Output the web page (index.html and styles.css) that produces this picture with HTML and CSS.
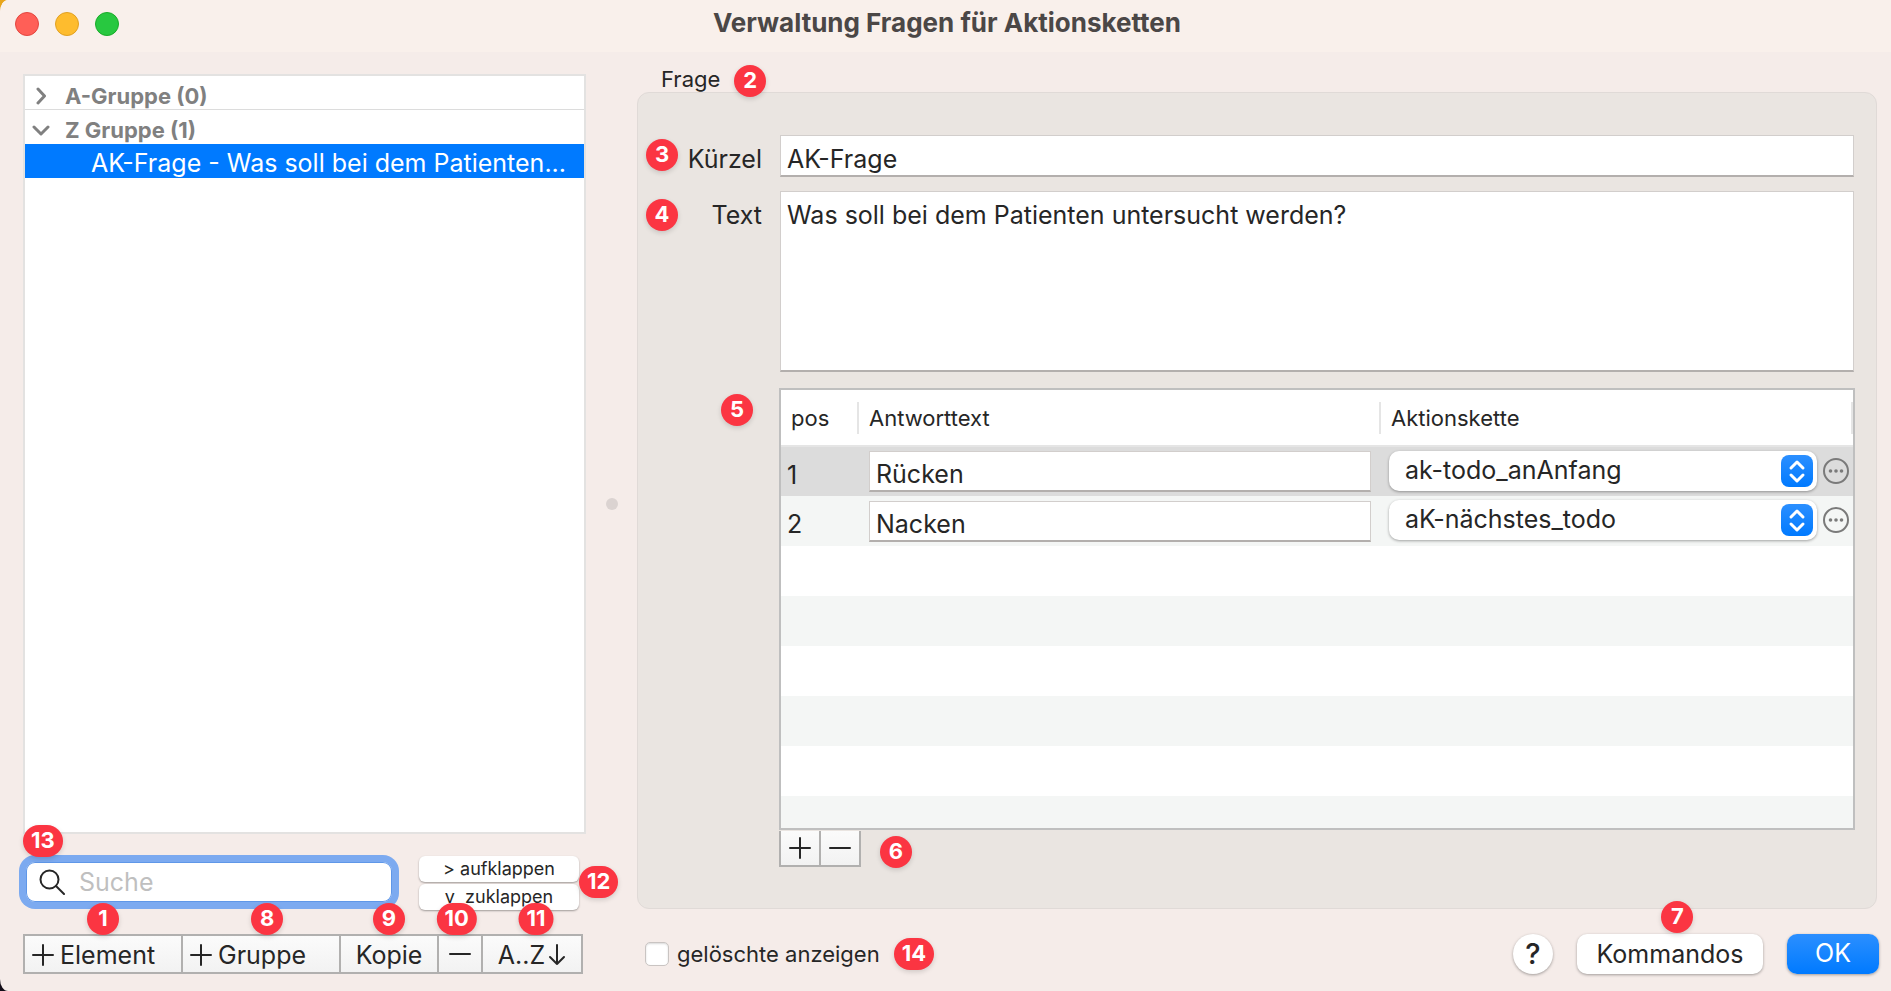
FILE: index.html
```html
<!DOCTYPE html>
<html lang="de">
<head>
<meta charset="utf-8">
<title>Verwaltung Fragen für Aktionsketten</title>
<link rel="stylesheet" href="styles.css">
</head>
<body>
<div class="window">
  <header class="titlebar">
    <div class="lights">
      <button class="light light-close" type="button" aria-label="Schließen"></button>
      <button class="light light-min" type="button" aria-label="Minimieren"></button>
      <button class="light light-zoom" type="button" aria-label="Zoomen"></button>
    </div>
    <h1 class="title">Verwaltung Fragen für Aktionsketten</h1>
  </header>

  <div class="content">
    <aside class="sidebar">
      <ul class="tree">
        <li class="group">
          <svg class="chevron" viewBox="0 0 18 18"><path d="M6 2l6.500 7L6 16"/></svg>
          <span>A-Gruppe (0)</span>
        </li>
        <li class="group">
          <svg class="chevron" viewBox="0 0 18 18"><path d="M2 6l7 7 7-7"/></svg>
          <span>Z Gruppe (1)</span>
        </li>
        <li class="item">AK-Frage - Was soll bei dem Patienten...</li>
      </ul>

      <div class="search-row">
        <div class="search">
          <svg class="search-icon" viewBox="0 0 26 26"><circle cx="10.500" cy="10.500" r="9"/><path d="M17 17l8 8"/></svg>
          <input class="search-input" type="text" placeholder="Suche" aria-label="Suche">
          <span class="badge badge-search">13</span>
        </div>
        <div class="fold">
          <button class="fold-button" type="button">&gt; aufklappen</button>
          <button class="fold-button" type="button">v&nbsp; zuklappen</button>
          <span class="badge badge-fold">12</span>
        </div>
      </div>

      <div class="toolbar">
        <button class="tool tool-wide" type="button"><svg class="plus" viewBox="0 0 22 22"><path d="M1 11h20M11 1v20"/></svg>Element<span class="badge badge-above">1</span></button>
        <button class="tool tool-wide" type="button"><svg class="plus" viewBox="0 0 22 22"><path d="M1 11h20M11 1v20"/></svg>Gruppe<span class="badge badge-above badge-right">8</span></button>
        <button class="tool" type="button">Kopie<span class="badge badge-above">9</span></button>
        <button class="tool" type="button" aria-label="Löschen"><svg class="plus" viewBox="0 0 22 22"><path d="M1 10h20"/></svg><span class="badge badge-above badge-left">10</span></button>
        <button class="tool tool-sort" type="button">A..Z<svg class="arrow" viewBox="0 0 18 22"><path d="M9 1v19M2 13l7 7 7-7"/></svg><span class="badge badge-above badge-right">11</span></button>
      </div>
    </aside>

    <div class="splitter"><span class="splitter-dot"></span></div>

    <main class="main">
      <div class="legend"><h2 class="legend-text">Frage</h2><span class="badge">2</span></div>
      <section class="box">
        <div class="side"><span class="badge">3</span><label for="kuerzel">Kürzel</label></div>
        <input class="field" id="kuerzel" type="text" value="AK-Frage">

        <div class="side side-text"><span class="badge">4</span><label for="text">Text</label></div>
        <textarea class="field area" id="text">Was soll bei dem Patienten untersucht werden?</textarea>

        <div class="side side-table"><span class="badge">5</span></div>
        <div class="answers">
          <div class="table-frame">
            <table class="table">
              <colgroup><col class="col-pos"><col class="col-text"><col class="col-chain"></colgroup>
              <thead>
                <tr><th><div class="head">pos</div></th><th><div class="head">Antworttext</div></th><th><div class="head">Aktionskette</div></th></tr>
              </thead>
              <tbody>
                <tr class="selected">
                  <td class="pos">1</td>
                  <td class="cell-text"><input class="field cell-field" type="text" value="Rücken" aria-label="Antworttext 1"></td>
                  <td class="cell-chain"><div class="chain">
                    <div class="select-wrap">
                      <select class="select" aria-label="Aktionskette 1"><option>ak-todo_anAnfang</option></select>
                      <svg class="stepper" viewBox="0 0 32 32"><path d="M10 13l6-6 6 6M10 20l6 6 6-6"/></svg>
                    </div>
                    <button class="more" type="button" aria-label="Mehr"><svg viewBox="0 0 26 26"><circle class="ring" cx="13" cy="13" r="12"/><circle cx="7.500" cy="13" r="1.800"/><circle cx="13" cy="13" r="1.800"/><circle cx="18.500" cy="13" r="1.800"/></svg></button>
                  </div></td>
                </tr>
                <tr class="striped">
                  <td class="pos">2</td>
                  <td class="cell-text"><input class="field cell-field" type="text" value="Nacken" aria-label="Antworttext 2"></td>
                  <td class="cell-chain"><div class="chain">
                    <div class="select-wrap">
                      <select class="select" aria-label="Aktionskette 2"><option>aK-nächstes_todo</option></select>
                      <svg class="stepper" viewBox="0 0 32 32"><path d="M10 13l6-6 6 6M10 20l6 6 6-6"/></svg>
                    </div>
                    <button class="more" type="button" aria-label="Mehr"><svg viewBox="0 0 26 26"><circle class="ring" cx="13" cy="13" r="12"/><circle cx="7.500" cy="13" r="1.800"/><circle cx="13" cy="13" r="1.800"/><circle cx="18.500" cy="13" r="1.800"/></svg></button>
                  </div></td>
                </tr>
              </tbody>
            </table>
            <div class="stripes"></div>
          </div>
          <div class="row-tools">
            <div class="row-buttons">
              <button class="row-button" type="button" aria-label="Antwort hinzufügen"><svg class="plus" viewBox="0 0 22 22"><path d="M1 11h20M11 1v20"/></svg></button>
              <button class="row-button" type="button" aria-label="Antwort entfernen"><svg class="plus" viewBox="0 0 22 22"><path d="M1 11h20"/></svg></button>
            </div>
            <span class="badge">6</span>
          </div>
        </div>
      </section>

      <footer class="footer">
        <input class="check" id="deleted" type="checkbox">
        <label class="check-label" for="deleted">gelöschte anzeigen</label>
        <span class="badge">14</span>
        <div class="actions">
          <button class="help" type="button">?</button>
          <button class="push" type="button">Kommandos<span class="badge badge-above badge-right">7</span></button>
          <button class="push push-ok" type="button">OK</button>
        </div>
      </footer>
    </main>
  </div>
</div>
</body>
</html>
```

FILE: styles.css
```css
* { box-sizing: border-box; }

body {
  margin: 0;
  background: linear-gradient(#e8a51c 0 50%, #120c18 50%);
  color: #262626;
  font: 25px/32px Inter, "Liberation Sans", sans-serif;
}

button, input, textarea, select { font: inherit; color: inherit; margin: 0; }
button { border: 0; padding: 0; }

.window {
  display: flex;
  flex-direction: column;
  min-height: 100vh;
  overflow: hidden;
  background: #f5ece9;
  border-radius: 8px 0 0 8px / 12px 0 0 12px;
}

/* Title bar */
.titlebar {
  display: grid;
  grid-template-columns: 1fr auto 1fr;
  align-items: center;
  height: 52px;
  padding: 0 12px 4px 15px;
  background: #f9f0eb;
}
.lights { display: flex; gap: 16px; }
.light { width: 24px; height: 24px; border-radius: 50%; border: 1px solid; }
.light-close { background: #ff5f57; border-color: #e2463f; }
.light-min { background: #febc2e; border-color: #e0a023; }
.light-zoom { background: #28c840; border-color: #1aab29; }
.title { margin: 0; font-size: 26px; line-height: 32px; font-weight: 700; color: #4b4746; padding-bottom: 2px; }

.content { display: flex; flex: 1; padding: 0 12px 17px 23px; }

/* Sidebar */
.sidebar { display: flex; flex-direction: column; flex: 0 0 563px; padding-top: 22px; }
.tree {
  flex: 1;
  margin: 0;
  padding: 0;
  list-style: none;
  background: #fff;
  border: 2px solid #e3e2e1;
}
.group {
  display: flex;
  align-items: center;
  gap: 15px;
  height: 34px;
  padding: 6px 0 0 7px;
  color: #808080;
  font-size: 22px;
  font-weight: 700;
}
.group:first-child { border-bottom: 1px solid #dcdcdc; }
.chevron { width: 18px; height: 18px; fill: none; stroke: #808080; stroke-width: 3; stroke-linecap: round; stroke-linejoin: round; }
.item {
  height: 34px;
  padding-left: 66px;
  background: #007aff;
  color: #fff;
  line-height: 38px;
  white-space: nowrap;
  overflow: hidden;
}

.search-row { display: flex; justify-content: space-between; padding: 22px 7px 24px 0; }
.search {
  position: relative;
  display: flex;
  align-items: center;
  gap: 14px;
  width: 366px;
  height: 40px;
  margin: 6px 0 0 3px;
  padding-left: 13px;
  background: #fff;
  border-radius: 9px;
  box-shadow: 0 0 0 7px #7caaf0, inset 0 0 0 1px #5f97e8;
}
.search-icon { flex: none; width: 26px; height: 26px; fill: none; stroke: #262626; stroke-width: 2; stroke-linecap: round; }
.search-input { flex: 1; min-width: 0; height: 32px; padding: 0; border: 0; background: none; outline: 0; }
.search-input::placeholder { color: #bfbfbf; opacity: 1; }
.fold { position: relative; display: flex; flex-direction: column; gap: 2px; width: 160px; }
.fold-button {
  height: 26px;
  background: #fff;
  border-radius: 6px;
  box-shadow: 0 1px 2px rgba(0, 0, 0, .35);
  font-size: 18px;
  line-height: 24px;
}

.toolbar { display: grid; grid-template-columns: 160fr 158fr 98fr 44fr 100fr; margin-right: 3px; }
.tool {
  position: relative;
  display: flex;
  align-items: center;
  justify-content: center;
  height: 40px;
  margin-left: -2px;
  padding-top: 1px;
  background: linear-gradient(#fbfbfb, #f2f2f2);
  border: 2px solid #b1b0af;
}
.tool:first-child { margin-left: 0; }
.tool-wide { justify-content: flex-start; gap: 6px; padding-left: 7px; }
.tool-sort { gap: 3px; }
.plus { width: 22px; height: 22px; fill: none; stroke: #262626; stroke-width: 2; stroke-linecap: round; }
.arrow { width: 18px; height: 22px; fill: none; stroke: #262626; stroke-width: 2; stroke-linecap: round; stroke-linejoin: round; }

/* Numbered markers */
.badge {
  display: inline-block;
  flex: none;
  min-width: 32px;
  height: 32px;
  padding: 0 8px;
  border-radius: 16px;
  background: #fb3542;
  box-shadow: 0 2px 5px rgba(0, 0, 0, .15);
  color: #fff;
  font-size: 22px;
  font-weight: 700;
  line-height: 31px;
  text-align: center;
  z-index: 1;
}
.badge-search, .badge-fold, .badge-above { position: absolute; }
.badge-search { left: -3px; top: -37px; }
.badge-fold { left: 100%; top: 10px; }
.badge-above { left: 50%; top: -33px; transform: translateX(-50%); }
.badge-right { left: 54%; }
.badge-left { left: 42%; }

/* Splitter */
.splitter { display: flex; align-items: center; justify-content: center; flex: 0 0 51px; padding-bottom: 18px; }
.splitter-dot { width: 12px; height: 12px; border-radius: 50%; background: #dbd3d1; }

/* Question form */
.main { display: flex; flex-direction: column; flex: 1; min-width: 0; }
.legend { position: relative; z-index: 1; display: flex; align-items: flex-start; gap: 14px; height: 40px; padding: 13px 0 0 24px; }
.legend-text { margin: 0; font-size: 22px; font-weight: 400; line-height: 28px; }
.box {
  flex: 1;
  display: grid;
  grid-template-columns: 116px minmax(0, 1fr);
  grid-template-rows: 42px 183px minmax(0, 1fr);
  gap: 14px 17px;
  margin-right: 2px;
  padding: 42px 21px 40px 8px;
  background: #eae5e1;
  border: 1px solid #e0dad7;
  border-radius: 12px;
}
.side { display: flex; justify-content: space-between; align-items: flex-start; padding-top: 4px; }
.side label { padding-top: 4px; }
.side-text { padding-top: 8px; }
.side-text label { padding-top: 0; }
.side-table { justify-content: flex-end; padding: 6px 9px 0 0; }
.field {
  display: block;
  width: 100%;
  padding: 6px 7px 0;
  background: #fff;
  border: 1px solid #d2cecc;
  border-bottom: 2px solid #b3afad;
  border-radius: 0;
  outline: 0;
}
.box > .field { width: calc(100% - 2px); margin: 0 1px; padding-left: 6px; }
.area { height: 181px; padding-top: 7px; resize: none; }

.answers { display: flex; flex-direction: column; min-height: 0; }
.table-frame { display: flex; flex-direction: column; flex: 1; border: 2px solid #bfbfbf; background: #fff; }
.table { width: 100%; table-layout: fixed; border-collapse: collapse; }
.col-pos { width: 78px; }
.col-chain { width: 472px; }
th { height: 56px; padding: 0; border-bottom: 2px solid #e5e5e5; font-size: 22px; font-weight: 400; text-align: left; }
.head { height: 32px; padding-left: 10px; border-right: 2px solid #e5e5e5; }
td { height: 50px; padding: 0; }
.selected { background: #dcdcdc; }
.striped { background: #f4f6f5; }
.pos { padding: 6px 0 0 6px; }
.cell-text { padding: 0 10px; }
.cell-field { height: 41px; padding: 6px 6px 0; }
.cell-chain { padding: 0 4px 2px 8px; }
.chain { display: flex; align-items: center; gap: 6px; }
.select-wrap { position: relative; flex: 1; }
.select {
  display: block;
  width: 100%;
  height: 40px;
  padding: 0 44px 2px 16px;
  appearance: none;
  background: #fff;
  border: 0;
  border-radius: 10px;
  box-shadow: 0 1px 3px rgba(0, 0, 0, .35);
}
.stepper {
  position: absolute;
  right: 4px;
  top: 4px;
  width: 32px;
  height: 32px;
  border-radius: 8px;
  background: linear-gradient(#2b8fff, #007aff);
  fill: none;
  stroke: #fff;
  stroke-width: 3;
  stroke-linecap: round;
  stroke-linejoin: round;
  pointer-events: none;
}
.more { width: 26px; height: 26px; background: none; }
.more svg { display: block; fill: #7a7a7a; }
.more .ring { fill: none; stroke: #7a7a7a; stroke-width: 2; }
.stripes { flex: 1; background: repeating-linear-gradient(#fff 0 50px, #f4f6f5 50px 100px); }

.row-tools { display: flex; gap: 19px; align-items: center; }
.row-buttons { display: flex; }
.row-button {
  display: flex;
  align-items: center;
  justify-content: center;
  width: 42px;
  height: 36px;
  background: linear-gradient(#fbfbfb, #f2f2f2);
  border: 2px solid #b1b0af;
  border-top: 0;
}
.row-button + .row-button { margin-left: -2px; }
.row-tools .badge { margin-top: 6px; }

/* Footer */
.footer { display: flex; align-items: center; height: 40px; margin-top: 25px; padding-left: 8px; }
.check {
  width: 24px;
  height: 24px;
  appearance: none;
  background: #fff;
  border: 1px solid #c9c4c2;
  border-radius: 5px;
  box-shadow: inset 0 1px 2px rgba(0, 0, 0, .15);
}
.check-label { margin: 0 14px 0 8px; font-size: 22px; }
.actions { display: flex; align-items: center; gap: 24px; margin-left: auto; }
.help { width: 40px; height: 40px; border-radius: 50%; background: #fff; box-shadow: 0 1px 3px rgba(0, 0, 0, .35); font-size: 29px; font-weight: 500; }
.push { position: relative; width: 186px; height: 40px; border-radius: 10px; background: #fff; box-shadow: 0 1px 3px rgba(0, 0, 0, .35); }
.push-ok { width: 92px; padding-bottom: 2px; background: linear-gradient(#2b8fff, #007aff); color: #fff; }
```
